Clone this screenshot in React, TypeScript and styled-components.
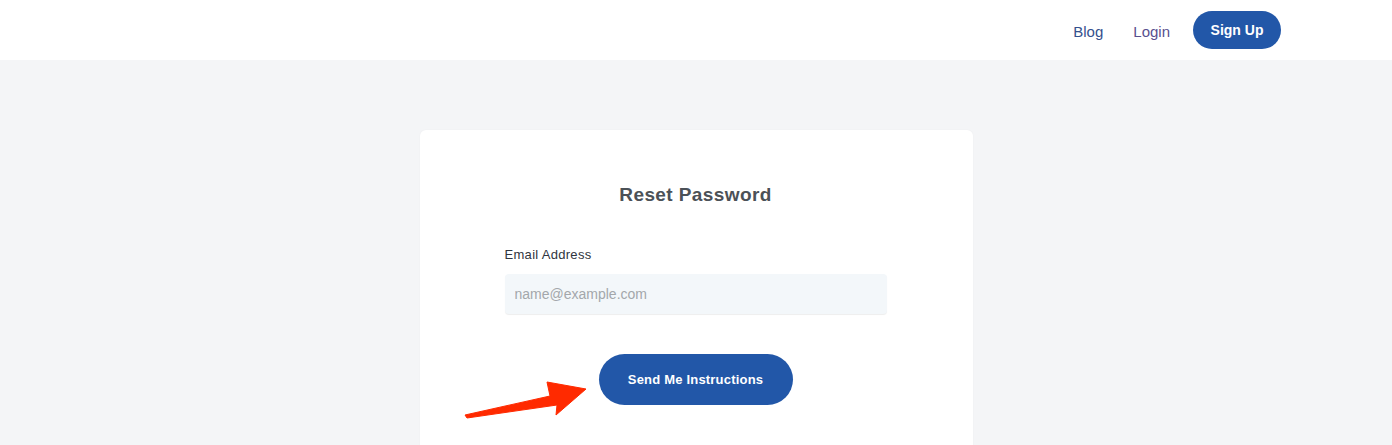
import React from "react";
import styled, { createGlobalStyle } from "styled-components";

const Global = createGlobalStyle`
  html, body { margin: 0; padding: 0; }
  body {
    background: #f4f5f7;
    font-family: "Liberation Sans", Arial, sans-serif;
    -webkit-font-smoothing: antialiased;
  }
`;

const Page = styled.div`
  height: 445px;
  background: #f4f5f7;
  overflow: hidden;
`;

const Header = styled.header`
  height: 60px;
  background: #ffffff;
  display: flex;
  align-items: center;
  justify-content: flex-end;
  padding-right: 111px;
  box-sizing: border-box;
`;

const Nav = styled.nav`
  display: flex;
  align-items: center;
  gap: 30px;
`;

const NavLink = styled.a<{ $visited?: boolean }>`
  font-size: 15px;
  color: ${(p) => (p.$visited ? "#58508f" : "#34508d")};
  text-decoration: none;
  padding-top: 2px;
`;

const NavButton = styled.a`
  display: flex;
  align-items: center;
  justify-content: center;
  width: 88px;
  height: 38px;
  border-radius: 19px;
  background: #2257a8;
  color: #fff;
  font-weight: 700;
  font-size: 14px;
  text-decoration: none;
  margin-left: -7px;
  margin-top: -1px;
`;

const Main = styled.main`
  display: flex;
  justify-content: center;
  padding-top: 70px;
`;

const Card = styled.section`
  position: relative;
  width: 553px;
  height: 330px;
  background: #ffffff;
  border-radius: 6px;
  box-sizing: border-box;
  padding: 51px 86px 0 85px;
  display: flex;
  flex-direction: column;
  box-shadow: 0 0 2px rgba(0, 0, 0, 0.04);
`;

const Title = styled.h1`
  margin: 0;
  text-align: center;
  font-size: 19px;
  font-weight: 700;
  color: #4b5157;
  letter-spacing: 0.4px;
  line-height: 28px;
`;

const Label = styled.label`
  margin-top: 38px;
  font-size: 13px;
  color: #2f3540;
  letter-spacing: 0.3px;
  line-height: 16px;
`;

const Input = styled.input`
  margin-top: 11px;
  height: 40px;
  border: none;
  border-radius: 4px;
  background: #f3f7fa;
  box-shadow: 0 1px 1px rgba(0, 0, 0, 0.07);
  padding: 0 10px;
  font-family: "Liberation Sans", Arial, sans-serif;
  font-size: 14px;
  color: #333;
  outline: none;
  &::placeholder { color: #a3a7ab; }
`;

const Submit = styled.button`
  align-self: center;
  margin-top: 40px;
  width: 194px;
  height: 51px;
  border: none;
  border-radius: 26px;
  background: #2257a8;
  color: #fff;
  font-family: "Liberation Sans", Arial, sans-serif;
  font-weight: 700;
  font-size: 13px;
  letter-spacing: 0.2px;
  cursor: pointer;
`;

const Arrow = styled.svg`
  position: absolute;
  left: 40px;
  top: 245px;
  width: 130px;
  height: 50px;
`;

export default function App() {
  return (
    <Page>
      <Global />
      <Header>
        <Nav>
          <NavLink href="#">Blog</NavLink>
          <NavLink href="#" $visited>Login</NavLink>
          <NavButton href="#">Sign Up</NavButton>
        </Nav>
      </Header>
      <Main>
        <Card>
          <Title>Reset Password</Title>
          <Label htmlFor="email">Email Address</Label>
          <Input id="email" placeholder="name@example.com" />
          <Submit>Send Me Instructions</Submit>
          <Arrow viewBox="460 375 130 50">
            <polygon
              points="465,415 550,396 547,382 586,389 556,415 557,405 467,418"
              fill="#ff2a00"
              stroke="#ff2a00"
              strokeWidth="1"
              strokeLinejoin="round"
            />
          </Arrow>
        </Card>
      </Main>
    </Page>
  );
}
